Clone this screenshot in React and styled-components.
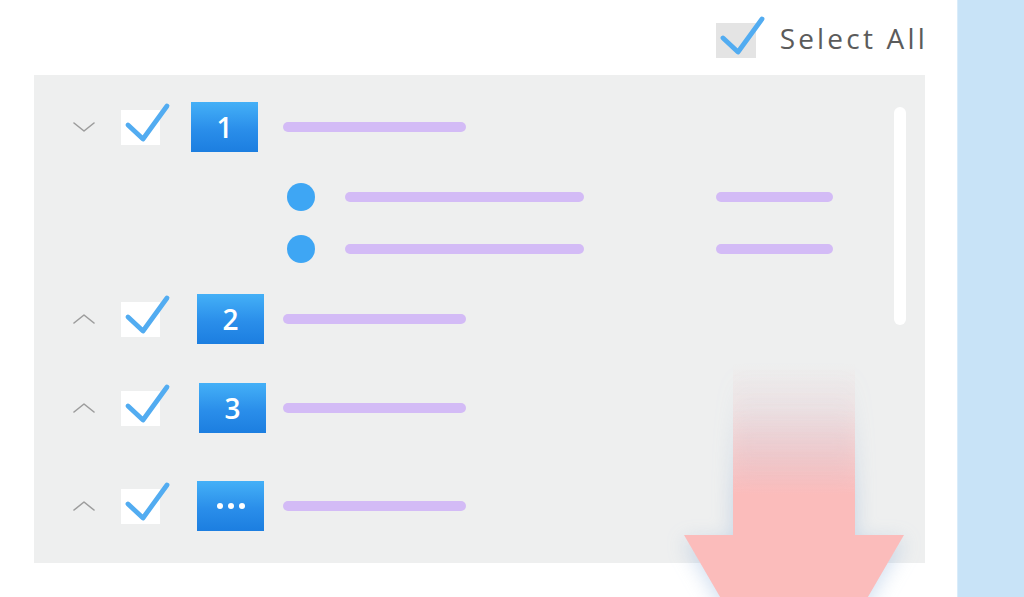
import React from 'react';
import styled, { createGlobalStyle } from 'styled-components';

const GlobalStyle = createGlobalStyle`
    html, body {
        margin: 0;
        padding: 0;
        background: #ffffff;
        font-family: "Open Sans", "Liberation Sans", sans-serif;
    }
`;

const Page = styled.div`
    display: flex;
    width: 1024px;
    height: 597px;
    overflow: hidden;
`;

const Main = styled.div`
    position: relative;
    width: 957px;
    padding: 0 32px 0 34px;
    box-sizing: border-box;
`;

const SidePanel = styled.div`
    flex: 1;
    background: #c8e3f7;
    border-left: 1px solid #d9ecfa;
`;

const Header = styled.div`
    height: 75px;
    display: flex;
    justify-content: flex-end;
    align-items: flex-start;
    padding-top: 23px;
    box-sizing: border-box;
`;

const SelectAllText = styled.span`
    margin: -3px -3px 0 24px;
    font-size: 28px;
    line-height: 36px;
    letter-spacing: 3.2px;
    color: #5b5b5b;
`;

const ListPanel = styled.div`
    position: relative;
    height: 488px;
    background: #eeefef;
    padding: 27px 0 0 39px;
    box-sizing: border-box;
`;

const Scrollbar = styled.div`
    position: absolute;
    top: 32px;
    right: 19px;
    width: 12px;
    height: 218px;
    border-radius: 6px;
    background: #ffffff;
`;

const Row = styled.div`
    display: flex;
    align-items: center;
    height: 50px;
    margin-top: ${p => p.$gap || 0}px;
`;

const Chevron = styled.svg`
    width: 22px;
    height: 10px;
    flex: none;
`;

const Box = styled.div`
    position: relative;
    flex: none;
    width: ${p => p.$w || 39}px;
    height: 35px;
    margin-left: ${p => p.$ml || 0}px;
    background: ${p => p.$tone || '#ffffff'};
`;

const CheckSvg = styled.svg`
    position: absolute;
    left: 0;
    top: -9px;
    width: 52px;
    height: 46px;
    overflow: visible;
`;

const BadgeCell = styled.div`
    width: 123px;
    flex: none;
    padding-left: ${p => p.$shift}px;
    box-sizing: border-box;
`;

const Badge = styled.div`
    width: 67px;
    height: 50px;
    display: flex;
    align-items: center;
    justify-content: center;
    gap: 5px;
    background: linear-gradient(180deg, #44b0f7 0%, #2a8eea 55%, #1c7ee0 100%);
    color: #ffffff;
    font-size: 28px;
    font-weight: 600;
`;

const Dot = styled.span`
    width: 6px;
    height: 6px;
    border-radius: 50%;
    background: #ffffff;
`;

const Bar = styled.div`
    height: 10px;
    width: ${p => p.$w}px;
    margin-left: ${p => p.$ml || 0}px;
    border-radius: 5px;
    background: #d3bbf6;
    flex: none;
`;

const SubList = styled.div`
    display: flex;
    flex-direction: column;
    gap: 24px;
    margin-top: 31px;
    padding-left: 214px;
`;

const SubRow = styled.div`
    display: flex;
    align-items: center;
    height: 28px;
`;

const Bullet = styled.span`
    width: 28px;
    height: 28px;
    border-radius: 50%;
    background: #3ea6f4;
    flex: none;
`;

const Arrow = styled.svg`
    position: absolute;
    left: 684px;
    top: 364px;
    width: 220px;
    height: 362px;
    filter: drop-shadow(0 6px 10px rgba(120, 160, 210, 0.35));
`;

function CheckMark() {
    return (
        <CheckSvg viewBox="0 0 52 46">
            <polyline points="7,24 22,38 46,5" fill="none" stroke="#52acf1"
                strokeWidth="4.8" strokeLinecap="round" strokeLinejoin="round" />
        </CheckSvg>
    );
}

function Toggle({ open }) {
    return (
        <Chevron viewBox="0 0 22 10">
            <polyline points={open ? '1,1 11,9 21,1' : '1,9 11,1 21,9'} fill="none"
                stroke="#9c9c9c" strokeWidth="1.6" strokeLinecap="round" strokeLinejoin="round" />
        </Chevron>
    );
}

function Group({ label, gap, shift, open }) {
    return (
        <Row $gap={gap}>
            <Toggle open={open} />
            <Box $ml={26}><CheckMark /></Box>
            <BadgeCell $shift={shift}>
                <Badge>
                    {label === '...' ? <><Dot /><Dot /><Dot /></> : label}
                </Badge>
            </BadgeCell>
            <Bar $w={183} />
        </Row>
    );
}

export default function App() {
    return (
        <Page>
            <GlobalStyle />
            <Main>
                <Header>
                    <Box $w={40} $tone="#e4e4e4"><CheckMark /></Box>
                    <SelectAllText>Select All</SelectAllText>
                </Header>
                <ListPanel>
                    <Scrollbar />
                    <Group label="1" shift={31} open />
                    <SubList>
                        <SubRow>
                            <Bullet />
                            <Bar $w={239} $ml={30} />
                            <Bar $w={117} $ml={132} />
                        </SubRow>
                        <SubRow>
                            <Bullet />
                            <Bar $w={239} $ml={30} />
                            <Bar $w={117} $ml={132} />
                        </SubRow>
                    </SubList>
                    <Group label="2" gap={31} shift={37} />
                    <Group label="3" gap={39} shift={39} />
                    <Group label="..." gap={48} shift={37} />
                </ListPanel>
                <Arrow viewBox="0 0 220 362">
                    <defs>
                        <linearGradient id="arrowFade" x1="0" y1="0" x2="0" y2="362" gradientUnits="userSpaceOnUse">
                            <stop offset="0" stopColor="#fbbcbb" stopOpacity="0" />
                            <stop offset="0.12" stopColor="#fbbcbb" stopOpacity="0.2" />
                            <stop offset="0.36" stopColor="#fbbcbb" stopOpacity="1" />
                            <stop offset="1" stopColor="#fbbcbb" stopOpacity="1" />
                        </linearGradient>
                    </defs>
                    <polygon points="49,0 171,0 171,171 220,171 110,360 0,171 49,171" fill="url(#arrowFade)" />
                </Arrow>
            </Main>
            <SidePanel />
        </Page>
    );
}
